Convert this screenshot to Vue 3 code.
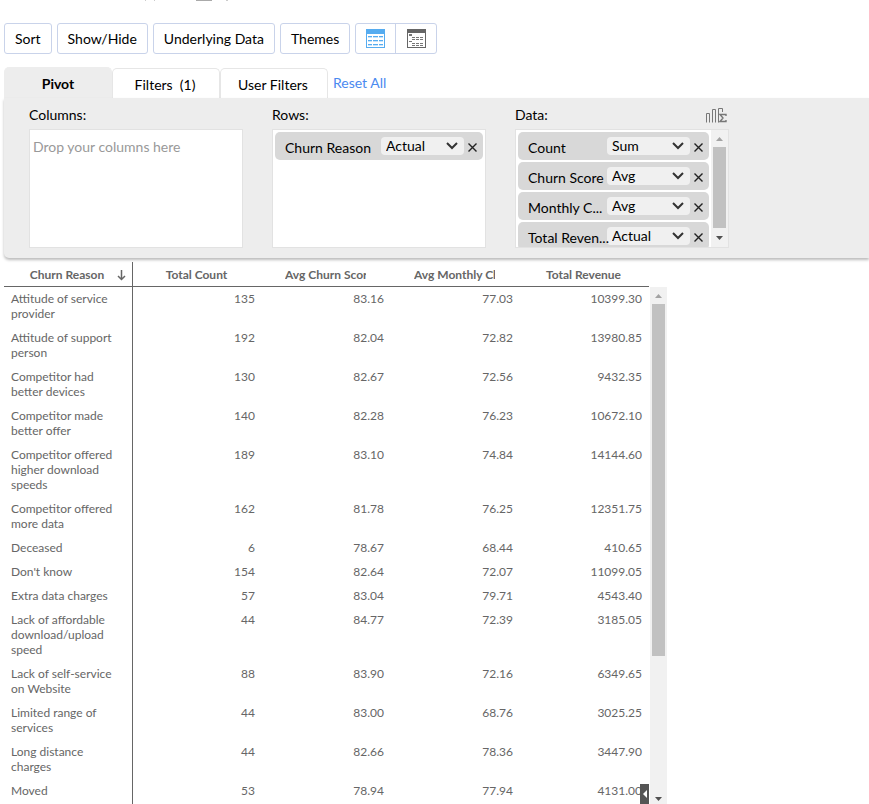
<script setup>
import { ref } from 'vue'

const tabs = [
  { id: 'pivot', label: 'Pivot' },
  { id: 'filters', label: 'Filters  (1)' },
  { id: 'user', label: 'User Filters' },
]
const activeTab = ref('pivot')
const options = ['Actual', 'Sum', 'Avg']
const rowFields = ref([{ name: 'Churn Reason', fn: 'Actual' }])
const dataFields = ref([
  { name: 'Count', fn: 'Sum' },
  { name: 'Churn Score', fn: 'Avg' },
  { name: 'Monthly C...', fn: 'Avg' },
  { name: 'Total Reven...', fn: 'Actual' },
])
const headers = ['Total Count', 'Avg Churn Score', 'Avg Monthly Charges', 'Total Revenue']
const rows = [
  ['Attitude of service provider', '135', '83.16', '77.03', '10399.30'],
  ['Attitude of support person', '192', '82.04', '72.82', '13980.85'],
  ['Competitor had better devices', '130', '82.67', '72.56', '9432.35'],
  ['Competitor made better offer', '140', '82.28', '76.23', '10672.10'],
  ['Competitor offered higher download speeds', '189', '83.10', '74.84', '14144.60'],
  ['Competitor offered more data', '162', '81.78', '76.25', '12351.75'],
  ['Deceased', '6', '78.67', '68.44', '410.65'],
  ["Don't know", '154', '82.64', '72.07', '11099.05'],
  ['Extra data charges', '57', '83.04', '79.71', '4543.40'],
  ['Lack of affordable download/upload speed', '44', '84.77', '72.39', '3185.05'],
  ['Lack of self-service on Website', '88', '83.90', '72.16', '6349.65'],
  ['Limited range of services', '44', '83.00', '68.76', '3025.25'],
  ['Long distance charges', '44', '82.66', '78.36', '3447.90'],
  ['Moved', '53', '78.94', '77.94', '4131.00'],
]
</script>

<template>
  <div class="page">
    <svg class="cut-bar" width="100" height="2" aria-hidden="true">
      <path d="M9 0h1v1h-1zM18 0h1v1h-1zM90 0h2v1h-2z" fill="#ccc" />
      <path d="M60 0h16v1h-16z" fill="#aaa" />
    </svg>
    <div class="toolbar">
      <button class="btn">Sort</button>
      <button class="btn">Show/Hide</button>
      <button class="btn">Underlying Data</button>
      <button class="btn">Themes</button>
      <div class="view-switch">
        <button class="icon-btn" aria-label="Table view">
          <svg width="19" height="19" viewBox="0 0 19 19" shape-rendering="crispEdges">
            <path d="M0 0h19v19H0z" fill="#56acf0" />
            <path d="M1 5h17v13H1z" fill="#fff" />
            <path d="M2 7.5h4M7 7.5h5M13 7.5h4M2 11.5h4M7 11.5h5M13 11.5h4M2 15.5h4M7 15.5h5M13 15.5h4" stroke="#56acf0" />
            <path d="M2 8.5h4M7 8.5h5M13 8.5h4M2 12.5h4M7 12.5h5M13 12.5h4M2 16.5h4M7 16.5h5M13 16.5h4" stroke="#c9e4fa" />
          </svg>
        </button>
        <button class="icon-btn" aria-label="Compact view">
          <svg width="19" height="19" viewBox="0 0 19 19" shape-rendering="crispEdges">
            <path d="M0 0h19v19H0z" fill="#666" />
            <path d="M1 4h17v14H1z" fill="#fff" />
            <path d="M2 5.5h3M2 6.5h3M5 8.5h3M9 8.5h3M13 8.5h3M5 10.5h3M9 10.5h3M13 10.5h3M2 12.5h3M5 14.5h3M9 14.5h3M13 14.5h3M5 16.5h3M9 16.5h3M13 16.5h3" stroke="#777" />
          </svg>
        </button>
      </div>
    </div>

    <div class="tabs">
      <button
        v-for="t in tabs"
        :key="t.id"
        class="tab"
        :class="{ active: t.id === activeTab }"
        @click="activeTab = t.id"
      >{{ t.label }}</button>
      <a class="reset" href="#">Reset All</a>
    </div>

    <section class="panel">
      <div class="zone">
        <div class="zone-head">Columns:</div>
        <div class="drop"><p class="hint">Drop your columns here</p></div>
      </div>
      <div class="zone">
        <div class="zone-head">Rows:</div>
        <div class="drop">
          <div class="list">
            <div v-for="(f, i) in rowFields" :key="f.name" class="chip">
              <label class="chip-name" :for="'row-' + i">{{ f.name }}</label>
              <span class="pick">
                <select :id="'row-' + i" v-model="f.fn"><option v-for="o in options" :key="o">{{ o }}</option></select>
                <svg class="chev" width="12" height="8" viewBox="0 0 12 8"><path d="M1 1l5 5 5-5" fill="none" stroke="#333" stroke-width="2" /></svg>
              </span>
              <button class="remove" :aria-label="'Remove ' + f.name">
                <svg width="9" height="9" viewBox="0 0 9 9"><path d="M.5.5l8 8M8.5.5l-8 8" stroke="#222" stroke-width="1.4" /></svg>
              </button>
            </div>
          </div>
        </div>
      </div>
      <div class="zone">
        <div class="zone-head">
          Data:
          <svg width="21" height="16" viewBox="0 0 21 16" fill="none" stroke="#777">
            <path d="M.5 15.500V6.500h3v9M6.500 15.500V2.500h3v13M12.500 15.500V1.500h4V5" />
            <path d="M20 9V7.500h-6l3 3.500-3 3.500h6V13" stroke-width="1.400" />
          </svg>
        </div>
        <div class="drop">
          <div class="list">
            <div v-for="(f, i) in dataFields" :key="f.name" class="chip">
              <label class="chip-name" :for="'data-' + i">{{ f.name }}</label>
              <span class="pick">
                <select :id="'data-' + i" v-model="f.fn"><option v-for="o in options" :key="o">{{ o }}</option></select>
                <svg class="chev" width="12" height="8" viewBox="0 0 12 8"><path d="M1 1l5 5 5-5" fill="none" stroke="#333" stroke-width="2" /></svg>
              </span>
              <button class="remove" :aria-label="'Remove ' + f.name">
                <svg width="9" height="9" viewBox="0 0 9 9"><path d="M.5.5l8 8M8.5.5l-8 8" stroke="#222" stroke-width="1.4" /></svg>
              </button>
            </div>
          </div>
          <div class="scroll">
            <svg width="7" height="4" viewBox="0 0 7 4"><path d="M0 4L3.500 0 7 4z" fill="#a3a3a3" /></svg>
            <div class="thumb"></div>
            <svg width="7" height="4" viewBox="0 0 7 4"><path d="M0 0h7L3.500 4z" fill="#505050" /></svg>
          </div>
        </div>
      </div>
    </section>

    <div class="result">
      <div class="grid-wrap">
        <table class="grid">
          <colgroup><col class="first"><col v-for="h in headers" :key="h"></colgroup>
          <thead>
            <tr>
              <th scope="col">
                <div class="th">Churn Reason</div>
                <svg class="sort" width="9" height="11" viewBox="0 0 9 11"><path d="M4.500 0v9.500M1 6l3.500 3.500L8 6" fill="none" stroke="#666" stroke-width="1.500" /></svg>
              </th>
              <th v-for="h in headers" :key="h" scope="col"><div class="th">{{ h }}</div></th>
            </tr>
          </thead>
          <tbody>
            <tr v-for="r in rows" :key="r[0]">
              <td v-for="(c, i) in r" :key="i">{{ c }}</td>
            </tr>
          </tbody>
        </table>
        <button class="collapse" aria-label="Collapse">
          <svg width="4" height="8" viewBox="0 0 4 8"><path d="M4 0v8L0 4z" fill="#fff" /></svg>
        </button>
      </div>
      <div class="scroll tall">
        <svg width="7" height="4" viewBox="0 0 7 4"><path d="M0 4L3.500 0 7 4z" fill="#a3a3a3" /></svg>
        <div class="thumb"></div>
        <svg width="7" height="4" viewBox="0 0 7 4"><path d="M0 0h7L3.500 4z" fill="#505050" /></svg>
      </div>
    </div>
  </div>
</template>

<style>
body { background: #fff; }
</style>

<style scoped>
* { box-sizing: border-box; }
.page {
  height: 100vh;
  display: flex;
  flex-direction: column;
  padding-left: 4px;
  overflow: hidden;
  font: 14px/20px Lato, "Liberation Sans", sans-serif;
  color: #000;
}
button, select { font: inherit; color: inherit; }
svg { display: block; flex: none; }
.cut-bar { margin-left: 132px; }
.toolbar { display: flex; gap: 5px; padding-top: 21px; flex: none; }
.btn, .view-switch { height: 31px; border: 1px solid #c9d3ea; border-radius: 3px; background: #fff; }
.btn { padding: 0 10px; }
.view-switch { display: flex; }
.icon-btn { width: 39px; border: 0; padding: 0; background: none; display: flex; align-items: center; justify-content: center; }
.icon-btn + .icon-btn { width: 41px; border-left: 1px solid #c9d3ea; }
.tabs { display: flex; align-items: flex-end; height: 44px; flex: none; }
.tab {
  width: 108px;
  height: 30px;
  padding: 2px 2px 0 0;
  border: 1px solid #e6e6e6;
  border-bottom: 0;
  border-radius: 5px 5px 0 0;
  background: #fff;
  white-space: pre;
}
.tab.active { height: 31px; padding: 2px 0 0; background: #ededed; border-color: #ededed; font-weight: 700; }
.reset { align-self: flex-start; padding: 19px 0 0 5px; color: #4a8af0; text-decoration: none; }
.panel {
  display: flex;
  gap: 29px;
  flex: none;
  height: 160px;
  padding: 7px 25px 0;
  background: #ededed;
  border-radius: 0 0 0 5px;
  box-shadow: 0 2px 3px #bbb;
}
.zone { width: 214px; }
.zone-head { display: flex; align-items: center; justify-content: space-between; height: 24px; padding: 0 2px 4px 0; }
.drop { display: flex; height: 119px; border: 1px solid #e2e2e2; background: #fff; overflow: hidden; }
.hint { margin: 0; padding: 7px 3px; color: #999; }
.list { flex: 1; min-width: 0; padding: 2px; display: flex; flex-direction: column; gap: 2px; }
.chip { display: flex; flex: none; align-items: center; height: 28px; padding-left: 10px; border-radius: 5px; background: #d8d8d8; }
.chip-name { position: relative; z-index: 1; flex: 1; min-width: 0; padding-top: 3px; white-space: nowrap; }
.pick { position: relative; width: 83px; height: 18px; }
.pick select { display: block; width: 100%; height: 18px; padding: 0 5px; border: 0; border-radius: 4px; background: #f0f0f0; appearance: none; line-height: 18px; }
.chev { position: absolute; right: 6px; top: 5px; pointer-events: none; }
.remove { width: 19px; height: 28px; padding: 2px 0 0 4px; border: 0; background: none; }
.scroll { width: 17px; flex: none; display: flex; flex-direction: column; align-items: center; padding: 7px 0; background: #f1f1f1; }
.thumb { width: 13px; height: 81px; margin: 6px 0 auto; background: #c1c1c1; }
.tall { margin-top: 25px; padding: 7px 0 3px; }
.tall .thumb { height: 352px; }
.result { display: flex; flex: 1; min-height: 0; gap: 1px; padding-top: 4px; }
.grid-wrap { position: relative; width: 645px; overflow: hidden; }
.grid { width: 100%; table-layout: fixed; border-collapse: separate; border-spacing: 0; font-size: 12px; line-height: 15px; color: #666; }
.first { width: 129px; }
th { position: relative; height: 25px; padding: 0 25px 0 23px; border-bottom: 1px solid #666; font-weight: 700; }
.th { overflow: hidden; white-space: nowrap; }
th:first-child, td:first-child { border-right: 1px solid #666; }
.sort { position: absolute; right: 6px; top: 8px; }
td { padding: 4px 7px 5px; vertical-align: top; text-align: right; }
td:first-child { text-align: left; padding-right: 14px; }
tr:last-child td { padding-bottom: 8px; }
.collapse { position: absolute; right: 0; bottom: 0; width: 9px; height: 20px; padding: 0 0 0 3px; border: 0; background: #555; }
</style>
